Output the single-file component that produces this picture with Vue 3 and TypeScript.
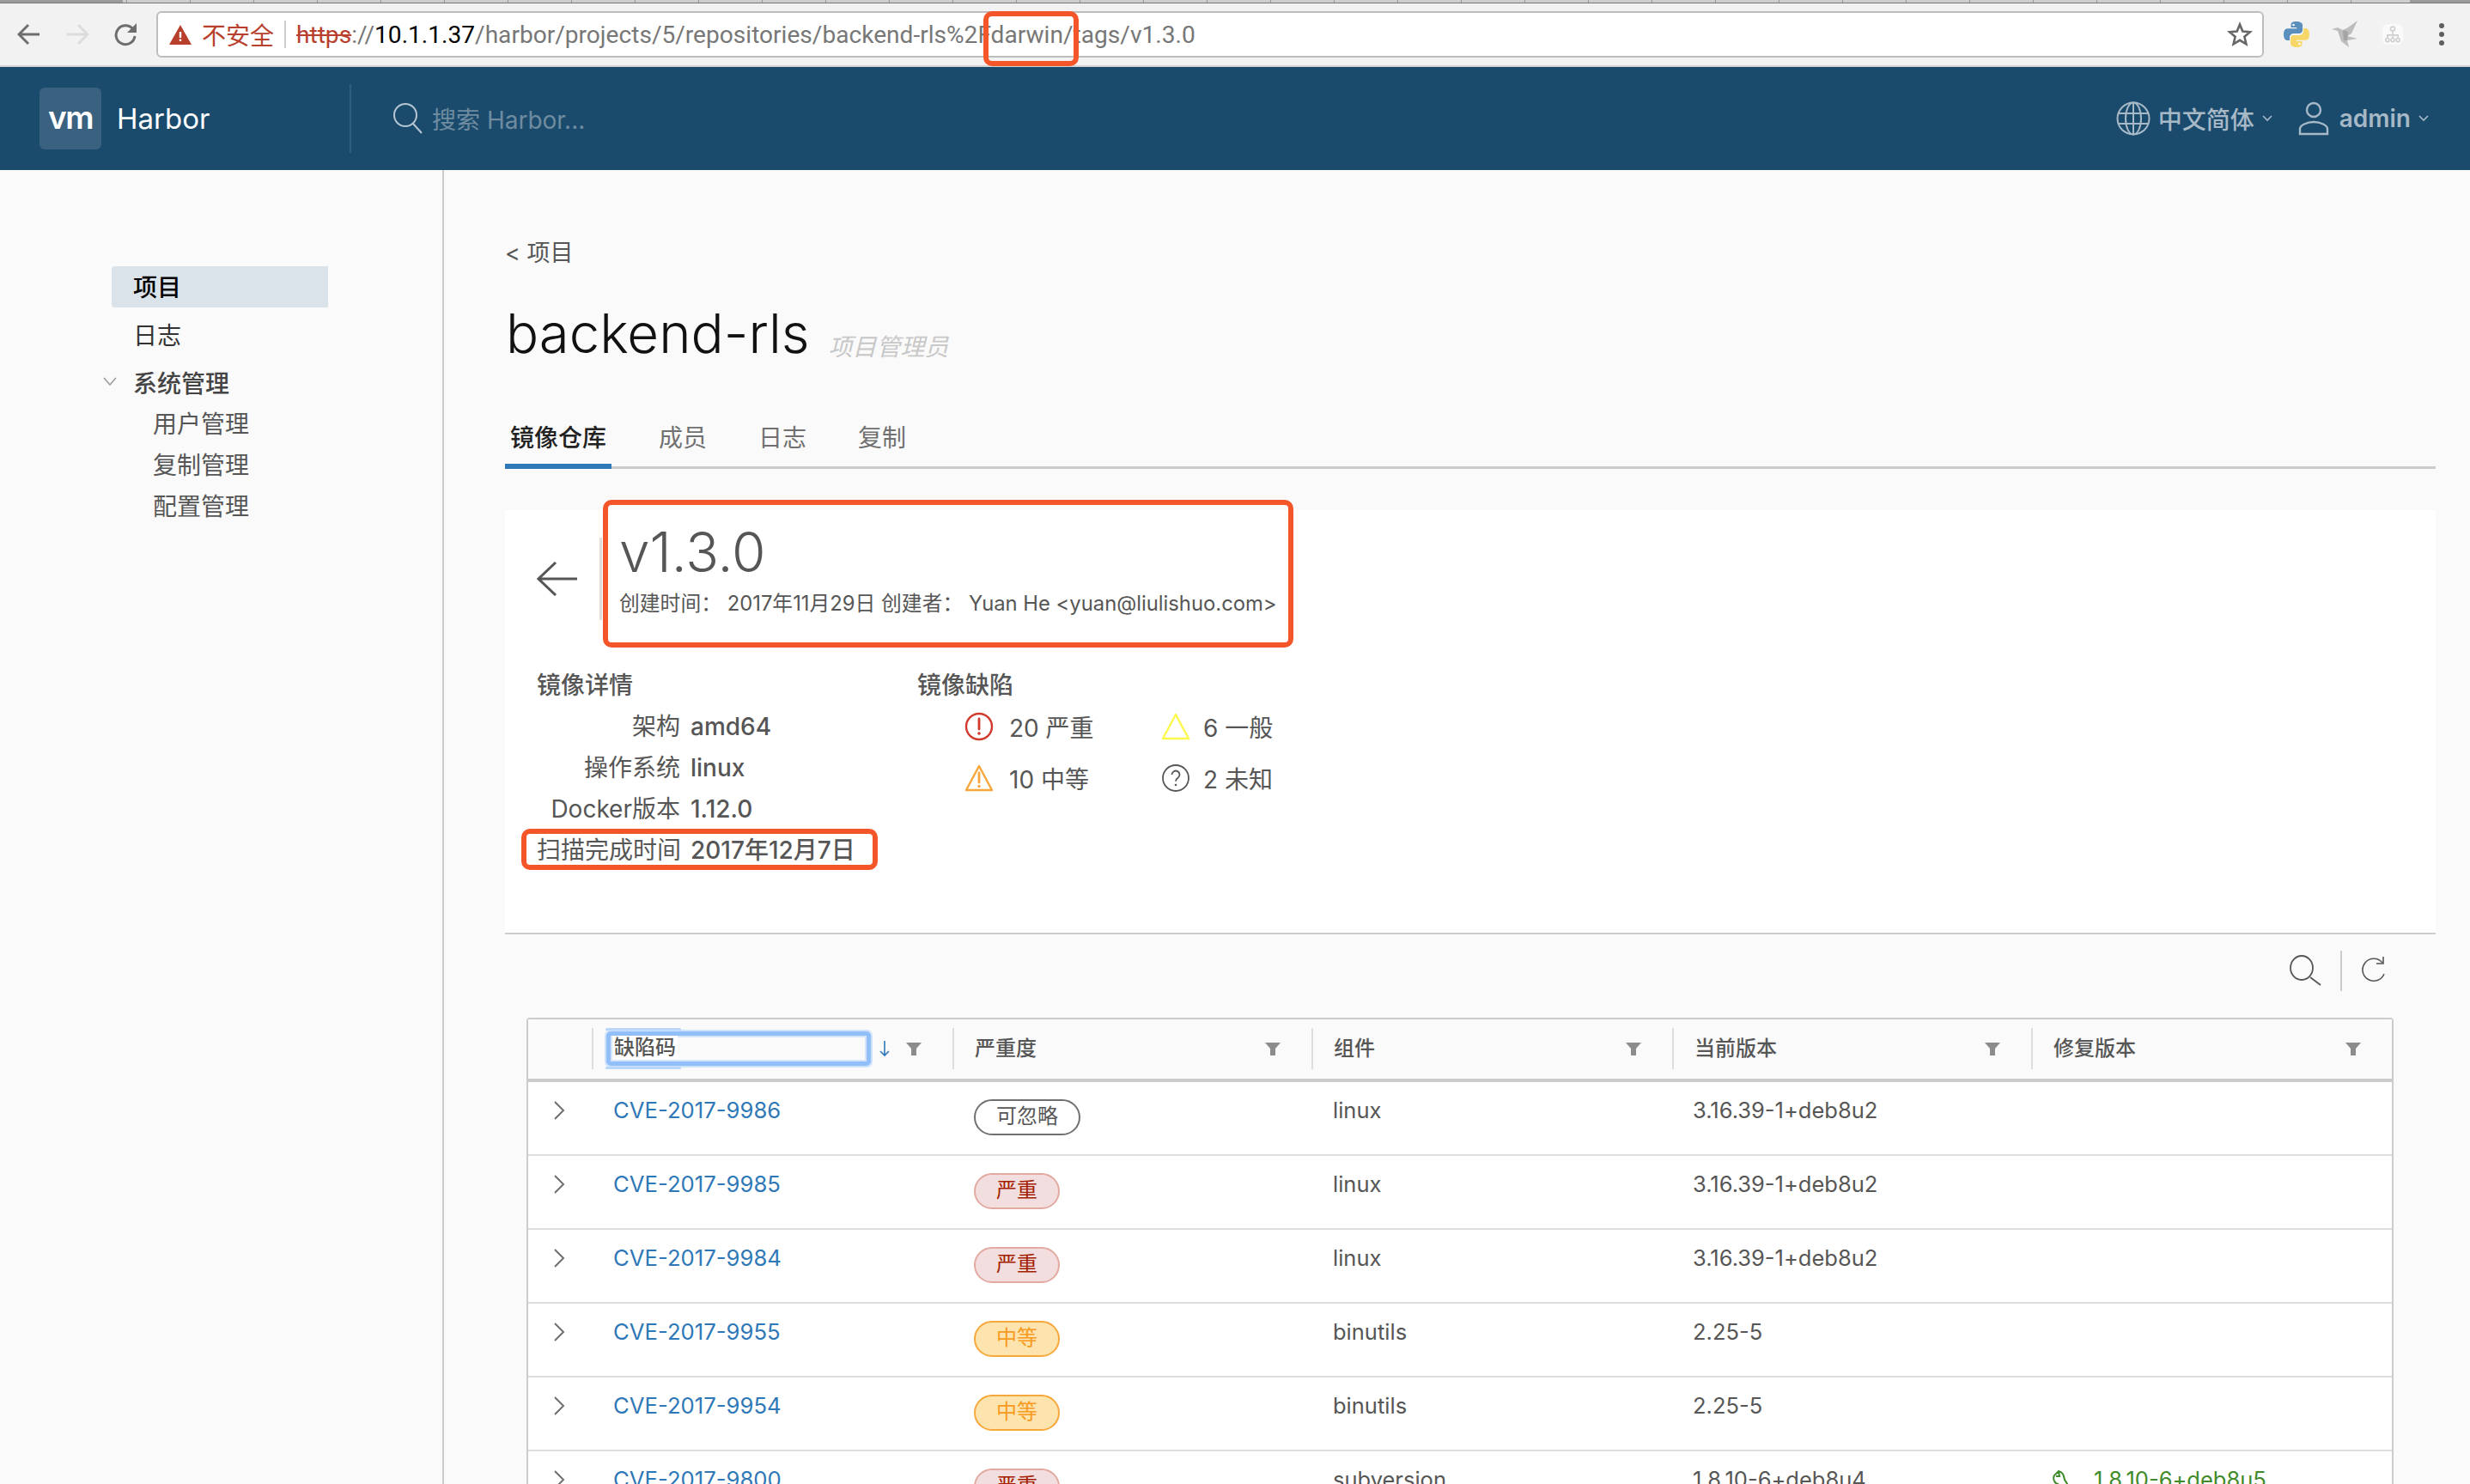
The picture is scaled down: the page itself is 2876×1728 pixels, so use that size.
<template>
  <div class="page">
    <div class="tabstrip" />

    <div class="chrome">
      <svg class="nav-icon" width="28" height="26" viewBox="0 0 28 26"><path d="M26 13H3M13 2 2 13l11 11" fill="none" stroke="#6e6e6e" stroke-width="3" /></svg>
      <svg class="nav-icon" width="28" height="26" viewBox="0 0 28 26"><path d="M2 13h23M15 2l11 11-11 11" fill="none" stroke="#dcdcdc" stroke-width="3" /></svg>
      <svg class="nav-icon" width="28" height="28" viewBox="0 0 28 28"><path d="M23.5 9A11 11 0 1 0 25 16" fill="none" stroke="#6e6e6e" stroke-width="3" /><path d="M27 1v11H16z" fill="#6e6e6e" /></svg>

      <div class="omnibox">
        <svg width="26" height="23" viewBox="0 0 26 23"><path d="M13 0 26 23H0z" fill="#b83f2e" /><path d="M11.8 8h2.4v7h-2.4zM11.8 16.5h2.4V19h-2.4z" fill="#fff" /></svg>
        <span class="insecure">不安全</span>
        <span class="omni-sep" />
        <span class="url"><s class="url-scheme">https</s>://<b class="url-host">10.1.1.37</b>/harbor/projects/5/repositories/backend-rls%2Fdarwin/tags/v1.3.0</span>
        <svg class="star" width="30" height="30" viewBox="0 0 30 30"><path d="M15 3.5l3.3 8 8.7.7-6.6 5.6 2 8.5-7.4-4.5-7.4 4.5 2-8.5L3 12.200l8.700-.7z" fill="none" stroke="#666" stroke-width="2.600" /></svg>
      </div>

      <svg class="ext python" width="32" height="32" viewBox="0 0 32 32">
        <path d="M15.800 1C10 1 9.500 3.400 9.500 5v3h6.700v1.200H5.500C2.800 9.200 1 11.500 1 16s1.700 7 4.500 7H8v-3.500c0-2.500 2.200-4.600 4.800-4.600h6.500c2.100 0 3.700-1.700 3.700-3.800V5c0-2.200-3-4-7.200-4z" fill="#5a8fbd" />
        <path d="M16.200 31c5.800 0 6.300-2.400 6.300-4v-3h-6.700v-1.200h10.700c2.700 0 4.500-2.300 4.500-6.800s-1.700-7-4.500-7H24v3.500c0 2.500-2.200 4.600-4.800 4.600h-6.500c-2.100 0-3.700 1.700-3.700 3.800V27c0 2.200 3 4 7.200 4z" fill="#f7d768" />
        <circle cx="12.500" cy="5" r="1.300" fill="#fff" /><circle cx="19.500" cy="27" r="1.300" fill="#fff" />
      </svg>
      <svg class="ext bird" width="34" height="34" viewBox="0 0 34 34">
        <path d="M31 1 20 9 14 12 8 9 1 11l7 2 4 12 9 7-2-8 12-2-12-3 5-3z" fill="#bdbdbd" />
        <path d="M14 12l1 12 4 0 1-10z" fill="#a4a4a4" />
      </svg>
      <div class="ext sitemap">
        <svg width="18" height="20" viewBox="0 0 22 24"><g fill="none" stroke="#cfcfcf" stroke-width="2"><circle cx="11" cy="4" r="3" /><circle cx="3.500" cy="20" r="2.500" /><circle cx="11" cy="20" r="2.500" /><circle cx="18.500" cy="20" r="2.500" /><path d="M11 7v10M3.500 17v-4h15v4" /></g></svg>
      </div>
      <div class="dots"><i /><i /><i /></div>
    </div>

    <header class="topbar">
      <div class="brand">
        <span class="vm-logo">vm</span>
        <span class="brand-name">Harbor</span>
      </div>
      <div class="search">
        <svg width="36" height="38" viewBox="0 0 36 38"><circle cx="15" cy="15" r="13" fill="none" stroke="#b6c5d1" stroke-width="2" /><path d="M24 25 34 36" stroke="#b6c5d1" stroke-width="2" /></svg>
        <span class="search-text">搜索 Harbor...</span>
      </div>
      <div class="top-right">
        <svg width="40" height="40" viewBox="0 0 40 40"><g fill="none" stroke="#a7b8c6" stroke-width="2"><circle cx="20" cy="20" r="18.500" /><ellipse cx="20" cy="20" rx="9" ry="18.500" /><path d="M20 2v36M3 14h34M3 26h34" /></g></svg>
        <span class="top-text lang">中文简体</span>
        <svg class="caret" width="12" height="8" viewBox="0 0 12 8"><path d="M1 1l5 5 5-5" fill="none" stroke="#a7b8c6" stroke-width="1.600" /></svg>
        <svg class="user" width="36" height="40" viewBox="0 0 36 40"><g fill="none" stroke="#a7b8c6" stroke-width="2.400"><circle cx="18" cy="10" r="8" /><path d="M2 38V32c0-4 8-8 16-8s16 4 16 8v6z" /></g></svg>
        <span class="top-text admin">admin</span>
        <svg class="caret" width="12" height="8" viewBox="0 0 12 8"><path d="M1 1l5 5 5-5" fill="none" stroke="#a7b8c6" stroke-width="1.600" /></svg>
      </div>
    </header>

    <div class="body">
      <aside class="sidebar">
        <div class="side-item active">项目</div>
        <div class="side-item">日志</div>
        <div class="side-item group">
          <svg class="group-caret" width="16" height="10" viewBox="0 0 16 10"><path d="M1 1l7 8 7-8" fill="none" stroke="#999" stroke-width="1.500" /></svg>
          系统管理
        </div>
        <div v-for="sub in subItems" :key="sub" class="side-sub">{{ sub }}</div>
      </aside>

      <main class="content">
        <div class="crumb">&lt; 项目</div>
        <div class="title-row">
          <h1 class="title">backend-rls</h1>
          <span class="role">项目管理员</span>
        </div>
        <nav class="tabs">
          <span v-for="(tab, i) in tabs" :key="tab" class="tab" :class="{ current: i === 0 }">{{ tab }}</span>
        </nav>

        <section class="panel">
          <div class="panel-head">
            <svg class="back" width="48" height="40" viewBox="0 0 48 40"><path d="M47 20H3M22 1 2 20l20 19" fill="none" stroke="#565656" stroke-width="3" /></svg>
            <div class="panel-title">
              <div class="version">v1.3.0</div>
              <div class="meta">创建时间：&nbsp;2017年11月29日 创建者：&nbsp;Yuan He &lt;yuan@liulishuo.com&gt;</div>
            </div>
          </div>

          <div class="panel-body">
            <div class="facts">
              <div class="sec-title">镜像详情</div>
              <div v-for="f in facts" :key="f.label" class="fact">
                <span class="fact-label">{{ f.label }}</span>
                <span class="fact-value">{{ f.value }}</span>
              </div>
            </div>
            <div class="vulns">
              <div class="sec-title">镜像缺陷</div>
              <div class="vuln-grid">
                <div class="vuln">
                  <svg width="34" height="34" viewBox="0 0 34 34"><circle cx="17" cy="17" r="15" fill="none" stroke="#d0392b" stroke-width="2.400" /><path d="M17 8v12" stroke="#d0392b" stroke-width="2.800" stroke-linecap="round" /><circle cx="17" cy="25" r="1.800" fill="#d0392b" /></svg>
                  <span>20 严重</span>
                </div>
                <div class="vuln">
                  <svg width="34" height="32" viewBox="0 0 34 32"><path d="M17 2 32 30H2z" fill="none" stroke="#fdf84c" stroke-width="2.400" stroke-linejoin="round" /></svg>
                  <span>6 一般</span>
                </div>
                <div class="vuln">
                  <svg width="34" height="32" viewBox="0 0 34 32"><path d="M17 2 32 30H2z" fill="none" stroke="#f6a63a" stroke-width="2.400" stroke-linejoin="round" /><path d="M17 10v11" stroke="#f6a63a" stroke-width="2.800" stroke-linecap="round" /><circle cx="17" cy="25.500" r="1.700" fill="#f6a63a" /></svg>
                  <span>10 中等</span>
                </div>
                <div class="vuln">
                  <svg width="34" height="34" viewBox="0 0 34 34"><circle cx="17" cy="17" r="15" fill="none" stroke="#565656" stroke-width="1.800" /><path d="M12.500 13a4.500 4.500 0 1 1 7 3.800c-1.600 1-2.500 2-2.500 4" fill="none" stroke="#565656" stroke-width="1.800" /><circle cx="17" cy="25" r="1.300" fill="#565656" /></svg>
                  <span>2 未知</span>
                </div>
              </div>
            </div>
          </div>

          <div class="mark mark-head" />
          <div class="mark mark-scan" />
        </section>

        <div class="grid-tools">
          <svg width="38" height="36" viewBox="0 0 38 36"><ellipse cx="14" cy="15" rx="13" ry="14" fill="none" stroke="#565656" stroke-width="1.800" /><path d="M24 26l12 9" stroke="#565656" stroke-width="1.800" /></svg>
          <span class="tool-sep" />
          <svg class="tool-refresh" width="32" height="30" viewBox="0 0 32 30"><path d="M26 7A13 13 0 1 0 28 20" fill="none" stroke="#565656" stroke-width="1.600" /><path d="M27 0v8h-8" fill="none" stroke="#565656" stroke-width="1.600" /></svg>
        </div>

        <div class="table">
          <div class="thead">
            <div class="th th-expand" />
            <div class="th th-focused">
              <span class="focus-box"><span class="focus-text">缺陷码</span></span>
              <svg class="sort" width="12" height="20" viewBox="0 0 12 20"><path d="M6 1v17M1 13l5 5 5-5" fill="none" stroke="#2f78b7" stroke-width="1.600" /></svg>
              <svg class="filter" width="18" height="15" viewBox="0 0 18 15"><path d="M0 0h18l-6 7v8H6V7z" fill="#8c8c8c" /></svg>
            </div>
            <div v-for="col in columns" :key="col" class="th">
              <span class="th-text">{{ col }}</span>
              <svg class="filter" width="18" height="15" viewBox="0 0 18 15"><path d="M0 0h18l-6 7v8H6V7z" fill="#8c8c8c" /></svg>
            </div>
          </div>

          <div v-for="row in rows" :key="row.cve" class="tr">
            <div class="td td-expand">
              <svg width="14" height="22" viewBox="0 0 14 22"><path d="M2 1l10 10L2 21" fill="none" stroke="#6e6e6e" stroke-width="2" /></svg>
            </div>
            <div class="td td-link">{{ row.cve }}</div>
            <div class="td td-label"><span class="label" :class="row.level">{{ row.severity }}</span></div>
            <div class="td td-comp">{{ row.component }}</div>
            <div class="td">{{ row.version }}</div>
            <div class="td td-fix">
              <template v-if="row.fix">
                <svg width="24" height="24" viewBox="0 0 24 24"><path d="M8 2 3 7c-2 4 0 9 4 10l9 6 4-3-5-8C14 7 13 3 8 2zM8 2l1 6-4 0" fill="none" stroke="#3f8a2a" stroke-width="2" /></svg>
                <span>{{ row.fix }}</span>
              </template>
            </div>
          </div>
        </div>
      </main>
    </div>

    <div class="mark mark-url" />
  </div>
</template>

<script setup lang="ts">
interface VulnRow {
  cve: string
  severity: string
  level: string
  component: string
  version: string
  fix?: string
}

const subItems = ['用户管理', '复制管理', '配置管理']
const tabs = ['镜像仓库', '成员', '日志', '复制']
const columns = ['严重度', '组件', '当前版本', '修复版本']

const facts = [
  { label: '架构', value: 'amd64' },
  { label: '操作系统', value: 'linux' },
  { label: 'Docker版本', value: '1.12.0' },
  { label: '扫描完成时间', value: '2017年12月7日' },
]

const rows: VulnRow[] = [
  { cve: 'CVE-2017-9986', severity: '可忽略', level: 'neg', component: 'linux', version: '3.16.39-1+deb8u2' },
  { cve: 'CVE-2017-9985', severity: '严重', level: 'high', component: 'linux', version: '3.16.39-1+deb8u2' },
  { cve: 'CVE-2017-9984', severity: '严重', level: 'high', component: 'linux', version: '3.16.39-1+deb8u2' },
  { cve: 'CVE-2017-9955', severity: '中等', level: 'mid', component: 'binutils', version: '2.25-5' },
  { cve: 'CVE-2017-9954', severity: '中等', level: 'mid', component: 'binutils', version: '2.25-5' },
  { cve: 'CVE-2017-9800', severity: '严重', level: 'high', component: 'subversion', version: '1.8.10-6+deb8u4', fix: '1.8.10-6+deb8u5' },
]
</script>

<style>
html,
body {
  margin: 0;
  background: #fafafa;
  overflow: hidden;
}
</style>

<style scoped>
.page {
  position: relative;
  width: 2876px;
  height: 1728px;
  overflow: hidden;
  display: flex;
  flex-direction: column;
  background: #fafafa;
  color: #565656;
  font-family: Inter, "Noto Sans CJK SC", sans-serif;
  font-size: 26px;
}

.tabstrip {
  flex: none;
  height: 3px;
  border-bottom: 1px solid #777;
  background:
    linear-gradient(90deg, #9b9b9b 143px, transparent 143px, transparent 2806px, #9b9b9b 2806px),
    repeating-linear-gradient(90deg, #cfcfcf 0 73px, #999 73px 74px);
}

.chrome {
  flex: none;
  height: 72px;
  padding-left: 20px;
  display: flex;
  align-items: center;
  background: #f2f2f2;
  border-bottom: 2px solid #d4d4d4;
  box-sizing: content-box;
}
.nav-icon {
  flex: none;
  margin-right: 28px;
}
.omnibox {
  flex: none;
  box-sizing: border-box;
  width: 2454px;
  height: 54px;
  margin-left: -6px;
  padding: 0 11px 0 13px;
  display: flex;
  align-items: center;
  background: #fff;
  border: 2px solid #bdbdbd;
  border-radius: 6px;
}
.insecure {
  margin-left: 12px;
  color: #b83f2e;
  font-size: 28px;
}
.omni-sep {
  width: 2px;
  height: 32px;
  margin: 0 12px;
  background: #ccc;
}
.url {
  font-family: Roboto, sans-serif;
  font-size: 28.100px;
  color: #777;
  white-space: nowrap;
}
.url-scheme {
  color: #b83f2e;
}
.url-host {
  color: #000;
  font-weight: 400;
}
.star {
  margin-left: auto;
}
.ext {
  flex: none;
}
.python {
  margin-left: 22px;
}
.bird {
  margin-left: 24px;
}
.sitemap {
  margin-left: 26px;
  width: 24px;
  height: 24px;
  border-radius: 6px;
  background: #fafafa;
  display: flex;
  align-items: center;
  justify-content: center;
}
.sitemap svg {
  flex: none;
}
.dots {
  margin-left: 42px;
  display: flex;
  flex-direction: column;
  gap: 4px;
}
.dots i {
  width: 6px;
  height: 6px;
  border-radius: 50%;
  background: #5f5f5f;
}

.topbar {
  flex: none;
  height: 120px;
  display: flex;
  align-items: center;
  background: #1a4b6d;
}
.brand {
  width: 361px;
  padding-left: 46px;
  display: flex;
  align-items: center;
  gap: 18px;
}
.vm-logo {
  width: 72px;
  height: 72px;
  border-radius: 6px;
  background: #3a6280;
  color: #fff;
  font-size: 37px;
  font-weight: 600;
  letter-spacing: -1.500px;
  line-height: 70px;
  text-align: center;
}
.brand-name {
  color: #fff;
  font-size: 33px;
}
.search {
  height: 80px;
  padding-left: 48px;
  border-left: 2px solid #2f5d7c;
  display: flex;
  align-items: center;
  gap: 10px;
}
.search-text {
  color: #6f8ba0;
  font-size: 28px;
}
.top-right {
  margin-left: auto;
  padding-right: 48px;
  display: flex;
  align-items: center;
}
.top-text {
  color: #a7b8c6;
  font-size: 28px;
  font-weight: 500;
}
.admin {
  font-weight: 600;
}
.lang {
  margin-left: 9px;
}
.caret {
  margin-left: 9px;
}
.user {
  margin: 0 12px 0 30px;
}

.body {
  flex: 1;
  display: flex;
  min-height: 0;
}

.sidebar {
  flex: none;
  width: 517px;
  box-sizing: border-box;
  padding-top: 112px;
  border-right: 2px solid #ccc;
}
.side-item {
  position: relative;
  width: 252px;
  height: 48px;
  margin: 0 0 8px 130px;
  padding-left: 25px;
  box-sizing: border-box;
  font-size: 28px;
  line-height: 50px;
  color: #333;
}
.side-item.active {
  background: #dbe3ea;
  border-radius: 4px 0 0 4px;
  color: #000;
  font-weight: 500;
}
.side-item.group {
  margin-bottom: 0;
  font-weight: 500;
  color: #444;
}
.group-caret {
  position: absolute;
  left: -10px;
  top: 17px;
}
.side-sub {
  height: 48px;
  margin-left: 178px;
  font-size: 28px;
  line-height: 48px;
}

.content {
  flex: none;
  width: 2248px;
  margin-left: 71px;
}
.crumb {
  margin-top: 79px;
  height: 36px;
  font-size: 27px;
  line-height: 36px;
}
.title-row {
  margin-top: 37px;
  height: 76px;
  padding-left: 1px;
  display: flex;
  align-items: center;
  gap: 22px;
}
.title {
  margin: 0;
  font-size: 63.500px;
  font-weight: 300;
  line-height: 78px;
  color: #111;
}
.role {
  margin-top: 28px;
  color: #c8c8c8;
  font-size: 28px;
  font-style: italic;
}
.tabs {
  margin-top: 66px;
  height: 54px;
  box-sizing: border-box;
  border-bottom: 3px solid #ccc;
  display: flex;
}
.tab {
  height: 54px;
  box-sizing: border-box;
  margin-right: 60px;
  font-size: 28px;
  line-height: 36px;
  color: #707070;
  white-space: nowrap;
}
.tab.current {
  margin-right: 55px;
  padding: 0 6px;
  border-bottom: 6px solid #2f78b7;
  color: #222;
  font-weight: 500;
}

.panel {
  position: relative;
  margin-top: 48px;
  height: 494px;
  box-sizing: border-box;
  background: #fff;
  border-bottom: 2px solid #ccc;
  padding: 32px 0 0 37px;
}
.panel-head {
  display: flex;
  align-items: center;
}
.back {
  flex: none;
}
.panel-title {
  margin-left: 25px;
  height: 96px;
  padding-left: 20px;
  border-left: 3px solid #ddd;
}
.version {
  margin-top: -15px;
  font-size: 64px;
  font-weight: 300;
  line-height: 64px;
}
.meta {
  margin-top: 12px;
  font-size: 23.800px;
  line-height: 32px;
  white-space: nowrap;
}
.panel-body {
  margin-top: 60px;
  display: flex;
}
.facts {
  width: 443px;
}
.sec-title {
  height: 32px;
  font-size: 28px;
  line-height: 32px;
  font-weight: 500;
  white-space: nowrap;
}
.fact {
  margin-top: 16px;
  height: 32px;
  display: grid;
  grid-template-columns: 167px auto;
  column-gap: 12px;
  font-size: 28px;
  line-height: 32px;
}
.fact-label {
  text-align: right;
  white-space: nowrap;
}
.fact-value {
  white-space: nowrap;
  font-weight: 500;
}
.vuln-grid {
  margin: 16px 0 0 55px;
  display: grid;
  grid-template-columns: 229px 140px;
  row-gap: 28px;
}
.vuln {
  height: 32px;
  display: flex;
  align-items: center;
  gap: 18px;
  font-size: 28px;
  white-space: nowrap;
}
.vuln:nth-child(even) {
  gap: 15px;
}
.vuln svg {
  flex: none;
}

.mark {
  position: absolute;
  box-sizing: border-box;
  border: 6px solid #f4562a;
  border-radius: 10px;
  pointer-events: none;
}
.mark-head {
  left: 114px;
  top: -12px;
  width: 804px;
  height: 172px;
}
.mark-scan {
  left: 19px;
  top: 371px;
  width: 415px;
  height: 48px;
}
.mark-url {
  left: 1145px;
  top: 13px;
  width: 111px;
  height: 64px;
}

.grid-tools {
  height: 97px;
  box-sizing: border-box;
  padding: 19px 56px 0 0;
  display: flex;
  justify-content: flex-end;
  align-items: flex-start;
  gap: 21px;
}
.grid-tools svg {
  margin-top: 5px;
}
.grid-tools .tool-refresh {
  margin-top: 7px;
}
.tool-sep {
  width: 2px;
  height: 47px;
  background: #ccc;
}

.table {
  width: 2174px;
  margin-left: 25px;
  box-sizing: border-box;
  border: 2px solid #ccc;
  border-bottom: 0;
  border-radius: 4px 4px 0 0;
  background: #fff;
}
.thead,
.tr {
  display: grid;
  grid-template-columns: 74px 420px 418px 420px 418px 420px;
}
.thead {
  height: 73px;
  box-sizing: border-box;
  padding-top: 10px;
  background: #fafafa;
  border-bottom: 4px solid #ccc;
}
.th {
  height: 48px;
  box-sizing: border-box;
  border-left: 2px solid #ddd;
  padding: 0 36px 0 24px;
  display: flex;
  align-items: center;
  justify-content: space-between;
  font-size: 24px;
  font-weight: 500;
  white-space: nowrap;
}
.th-text {
  margin-top: -6px;
}
.th-expand {
  border-left: 0;
}
.th-focused {
  padding-left: 15px;
  justify-content: flex-start;
}
.focus-box {
  position: relative;
  flex: none;
  box-sizing: border-box;
  width: 308px;
  height: 40px;
  padding-left: 2px;
  border: 5px solid #90bff9;
  border-radius: 5px;
  box-shadow: 0 0 0 2px #cfe2fb, inset 0 0 0 2px #d5e6fc;
  line-height: 27px;
}
.focus-text {
  display: inline-block;
  padding: 0 2px;
  background: #fff;
}
.focus-box::before,
.focus-box::after {
  content: '';
  position: absolute;
  left: -6px;
  width: 88px;
  height: 3px;
  border-radius: 3px;
  background: #b9d6fb;
}
.focus-box::before {
  top: -9px;
}
.focus-box::after {
  bottom: -9px;
}
.sort {
  flex: none;
  margin-left: 10px;
}
.th-focused .filter {
  margin-left: auto;
}
.filter {
  flex: none;
}
.tr {
  height: 86px;
  box-sizing: border-box;
  border-bottom: 2px solid #ddd;
}
.td {
  padding: 15px 0 0 24px;
  font-size: 25.500px;
  line-height: 36px;
  white-space: nowrap;
}
.td-expand {
  padding: 22px 0 0 29px;
  line-height: 0;
}
.td-link {
  padding-left: 25px;
  color: #2f78b7;
  font-size: 25.700px;
}
.td-label {
  padding-top: 20px;
  padding-left: 25px;
}
.td-comp {
  padding-left: 25px;
}
.label {
  display: inline-block;
  box-sizing: border-box;
  height: 42px;
  padding: 0 24px;
  border: 2px solid #707070;
  border-radius: 21px;
  font-size: 24px;
  line-height: 36px;
}
.label.high {
  color: #a32100;
  background: #f2dede;
  border-color: #e3aaa2;
}
.label.mid {
  color: #f89a1e;
  background: #fde3ad;
  border-color: #f6a83a;
}
.td-fix {
  display: flex;
  align-items: flex-start;
  gap: 25px;
  color: #3f8a2a;
}
.td-fix svg {
  margin-top: 6px;
  flex: none;
}
</style>
